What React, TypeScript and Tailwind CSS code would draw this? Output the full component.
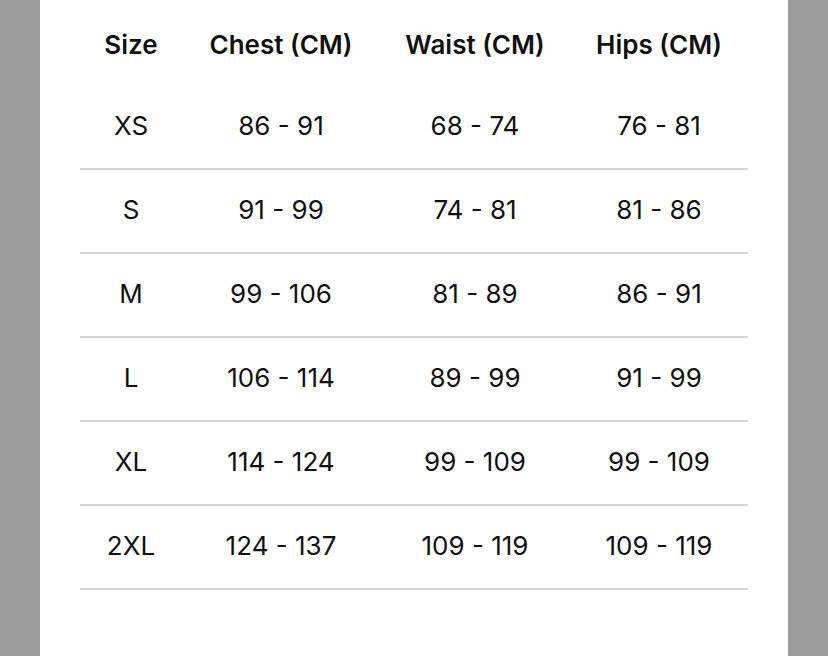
import React from "react";

const rows = [
  ["XS", "86 - 91", "68 - 74", "76 - 81"],
  ["S", "91 - 99", "74 - 81", "81 - 86"],
  ["M", "99 - 106", "81 - 89", "86 - 91"],
  ["L", "106 - 114", "89 - 99", "91 - 99"],
  ["XL", "114 - 124", "99 - 109", "99 - 109"],
  ["2XL", "124 - 137", "109 - 119", "109 - 119"],
];

const cols = ["w-[102px]", "w-[198px]", "w-[190px]", "w-[178px]"];
const heads = ["Size", "Chest (CM)", "Waist (CM)", "Hips (CM)"];

export default function App() {
  return (
    <div className="flex h-[656px] w-[828px] bg-[#9c9c9c]" style={{ fontFamily: "Inter, 'Noto Sans', sans-serif" }}>
      <div className="ml-[40px] w-[748px] bg-white px-[40px] text-[#111]">
        <div className="flex h-[86px] items-center pt-[2px] text-[26px] font-semibold">
          {heads.map((h, i) => (
            <div key={h} className={`${cols[i]} text-center`}>{h}</div>
          ))}
        </div>
        {rows.map((r) => (
          <div key={r[0]} className="flex h-[84px] items-center border-b-2 border-[#d6d6d6] pb-[4px] text-[26px]">
            {r.map((c, i) => (
              <div key={i} className={`${cols[i]} text-center`}>{c}</div>
            ))}
          </div>
        ))}
      </div>
    </div>
  );
}
